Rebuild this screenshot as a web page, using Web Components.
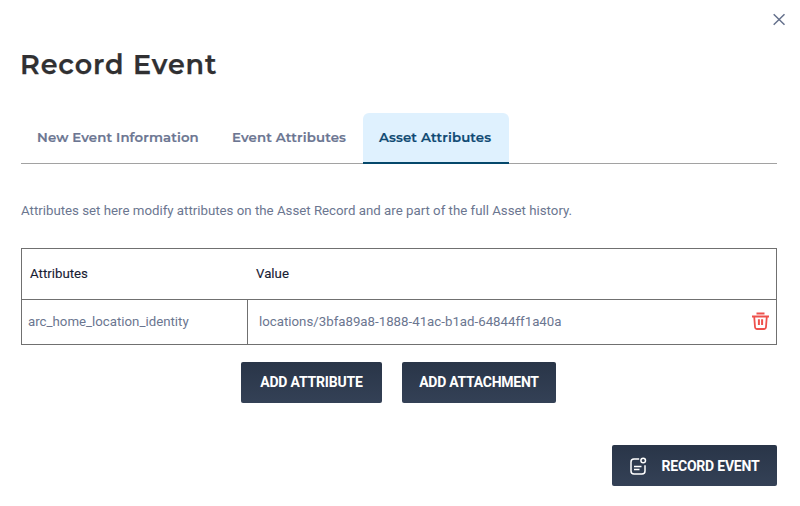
<!DOCTYPE html>
<html lang="en"><head><meta charset="utf-8"><title>Record Event</title>
<style>body{margin:0;background:#fff;font-family:Roboto,"Liberation Sans",sans-serif;font-size:13.28px;color:#6b7690}</style></head>
<body>
<record-dialog>
<dialog-tabs slot="tabs">
<dialog-tab style="--w:195px">New Event Information</dialog-tab>
<dialog-tab style="--w:147px">Event Attributes</dialog-tab>
<dialog-tab active style="--w:146px">Asset Attributes</dialog-tab>
</dialog-tabs>
<attribute-table></attribute-table>
<action-button slot="actions" style="--w:141px;--ls:-.18px">ADD ATTRIBUTE</action-button>
<action-button slot="actions" style="--w:154px;--ls:-.26px">ADD ATTACHMENT</action-button>
<action-button slot="submit" style="--w:165px;--ls:-.22px;--pb:0px"><record-icon slot="icon"></record-icon>RECORD EVENT</action-button>
</record-dialog>
<script>
function element(name, html) {
  customElements.define(name, class extends HTMLElement {
    constructor() { super(); this.attachShadow({mode: 'open'}).innerHTML = html; }
  });
}
element('record-dialog', `<style>
:host{display:block;box-sizing:border-box;width:800px;height:506px;padding:13px 23px 20px 21px}
header{display:flex;justify-content:flex-end;height:13px;margin-right:-9px}
header svg{display:block}
h1{margin:20px 0 0 -1px;height:38px;font:600 27px/38px Montserrat,Inter,sans-serif;letter-spacing:.92px;color:#303032;-webkit-text-stroke:.25px #303032;white-space:nowrap}
.tabs{margin-top:29px}
p{margin:37px 0 0;height:20px;line-height:20px;white-space:nowrap}
.table{margin-top:27px}
.actions{display:flex;gap:20px;justify-content:center;margin:17px 1px 0 0}
.submit{display:flex;justify-content:flex-end;margin-top:42px}
</style>
<header><svg width="13" height="13" viewBox="0 0 13 13" fill="none" stroke="#65718c" stroke-width="1.5"><path d="M.7 1.2 11.5 11.8M11.5 1.2.7 11.8"/></svg></header>
<h1>Record Event</h1>
<div class="tabs"><slot name="tabs"></slot></div>
<p>Attributes set here modify attributes on the Asset Record and are part of the full Asset history.</p>
<div class="table"><slot></slot></div>
<div class="actions"><slot name="actions"></slot></div>
<div class="submit"><slot name="submit"></slot></div>`);
element('dialog-tabs', `<style>:host{display:flex;height:51px;background:linear-gradient(#a2a2a2,#a2a2a2) bottom/100% 1px no-repeat}</style><slot></slot>`);
element('dialog-tab', `<style>
:host{display:flex;box-sizing:border-box;width:var(--w);padding:0 0 3px 16px;align-items:center;font:600 13.28px Montserrat,Inter,sans-serif;letter-spacing:.14px;-webkit-text-stroke:.2px;white-space:nowrap;color:#6c7692}
:host([active]){background:#dff1fe;color:#104a73;border-bottom:2px solid #05486b;border-radius:6px 6px 0 0;padding-bottom:1px}
</style><slot></slot>`);
element('attribute-table', `<style>
:host{display:grid;box-sizing:border-box;height:97px;grid-template-columns:226px 1fr;grid-template-rows:50px 44px;border:1px solid #707070;row-gap:1px;background:linear-gradient(#707070,#707070) 0 50px/100% 1px no-repeat;white-space:nowrap}
div{display:flex;align-items:center;box-sizing:border-box;padding-bottom:1px}
.h{color:#172033;padding-left:8px;-webkit-text-stroke:.1px}
.k{padding:0 0 2px 6px;border-right:1px solid #707070}
.v{padding:0 7px 2px 11px;justify-content:space-between}
</style>
<div class="h">Attributes</div><div class="h">Value</div>
<div class="k">arc_home_location_identity</div>
<div class="v"><span>locations/3bfa89a8-1888-41ac-b1ad-64844ff1a40a</span>
<svg width="17" height="18" viewBox="0 0 17 18" fill="none" stroke="#ee514c" stroke-width="1.8"><path d="M4.5 1.5h8M0 4.5h17M2.2 4.5 3 15q.2 2 2.2 2h6.6q2 0 2.2-2l.8-10.5"/><path d="M6.9 7.3v5.7M10.1 7.3v5.7" stroke-width="2"/></svg></div>`);
element('action-button', `<style>
:host{display:flex;box-sizing:border-box;width:var(--w);height:41px;padding-bottom:var(--pb,1px);align-items:center;justify-content:center;border-radius:2px;background:linear-gradient(#293548,#344156);color:#fff;font:700 14px Roboto,sans-serif;letter-spacing:var(--ls,0);white-space:nowrap}
</style><slot name="icon"></slot><slot></slot>`);
element('record-icon', `<style>:host{display:block;width:17px;height:18px;margin-right:15px}svg{display:block}</style>
<svg width="17" height="18" viewBox="0 0 17 18" fill="none" stroke="#fff" stroke-width="1.5"><path d="M9.2 2H4Q1 2 1 5v9q0 3 3 3h8q3 0 3-3V8.2M4 9.5h7.5M4 12.5h5.5"/><circle cx="13.2" cy="3.5" r="2.3"/></svg>`);
</script>
</body></html>
